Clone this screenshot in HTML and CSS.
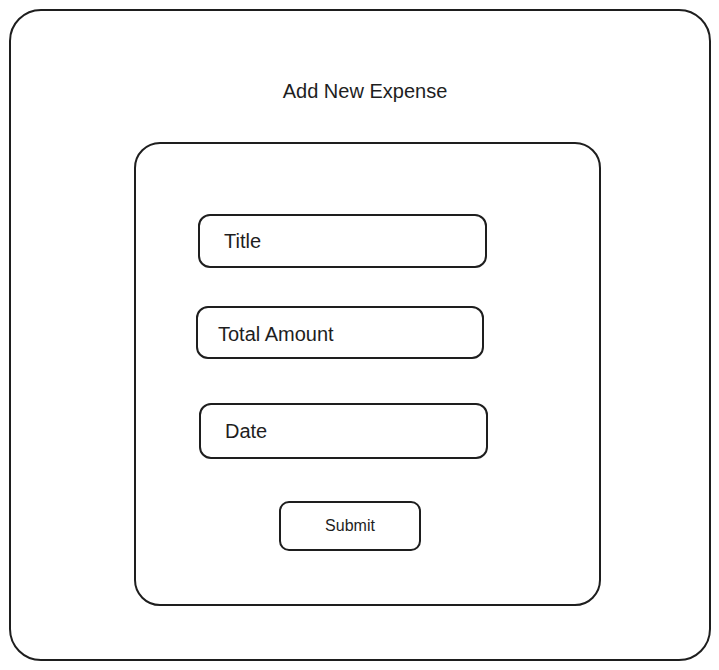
FILE: index.html
```html
<!DOCTYPE html>
<html lang="en">
<head>
  <meta charset="UTF-8" />
  <meta name="viewport" content="width=device-width, initial-scale=1.0"/>
  <title>Add New Expense</title>
  <link rel="stylesheet" href="styles.css">
</head>
<body>
  <div class="frame">
    <h1 class="heading">Add New Expense</h1>

    <form class="card" onsubmit="return false;">
      <div class="field field-title">Title</div>
      <div class="field field-amount">Total Amount</div>
      <div class="field field-date">Date</div>
      <button class="submit-btn" type="submit">Submit</button>
    </form>
  </div>
</body>
</html>
```

FILE: styles.css
```css
* {
  box-sizing: border-box;
}

html, body {
  margin: 0;
  padding: 0;
  background: #ffffff;
  font-family: 'Liberation Sans', Arial, sans-serif;
  color: #1e1e1e;
}

.frame {
  margin: 9px;
  width: 702px;
  height: 652px;
  border: 2px solid #1e1e1e;
  border-radius: 32px;
  display: flex;
  flex-direction: column;
}

.heading {
  margin: 68px 0 0;
  padding-left: 10px;
  font-size: 20px;
  font-weight: normal;
  line-height: 24px;
  text-align: center;
}

.card {
  margin: 39px 0 0 123px;
  width: 467px;
  height: 464px;
  border: 2px solid #1e1e1e;
  border-radius: 26px;
  padding: 70px 0 0 62px;
  display: flex;
  flex-direction: column;
  align-items: flex-start;
}

.field {
  width: 289px;
  height: 54px;
  border: 2px solid #1e1e1e;
  border-radius: 12px;
  padding-left: 24px;
  display: flex;
  align-items: center;
  font-size: 20px;
}

.field-amount {
  margin-top: 38px;
  margin-left: -2px;
  width: 288px;
  height: 53px;
  padding-left: 20px;
  padding-top: 3px;
}

.field-date {
  margin-top: 44px;
  margin-left: 1px;
  height: 56px;
  padding-top: 1px;
}

.submit-btn {
  margin: 42px 0 0 81px;
  width: 142px;
  height: 50px;
  border: 2px solid #1e1e1e;
  border-radius: 10px;
  background: #ffffff;
  color: #1e1e1e;
  font-family: 'Liberation Sans', Arial, sans-serif;
  font-size: 16px;
  padding: 0;
  cursor: pointer;
}
```
